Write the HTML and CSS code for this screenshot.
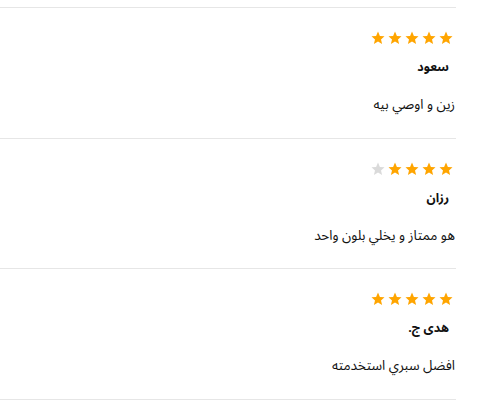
FILE: index.html
```html
<!DOCTYPE html>
<html lang="ar">
<head>
<meta charset="utf-8">
<link rel="stylesheet" href="styles.css">
</head>
<body>
<svg width="0" height="0" class="defs" aria-hidden="true">
  <defs>
    <polygon id="star" points="7,0.6 8.9,4.9 13.5,5.3 10,8.4 11.1,13 7,10.6 2.9,13 4,8.4 0.5,5.3 5.1,4.9"/>
  </defs>
</svg>
<div class="reviews" dir="rtl">
  <div class="review">
    <div class="stars">
      <svg class="on" viewBox="0 0 14 14"><use href="#star"/></svg><svg class="on" viewBox="0 0 14 14"><use href="#star"/></svg><svg class="on" viewBox="0 0 14 14"><use href="#star"/></svg><svg class="on" viewBox="0 0 14 14"><use href="#star"/></svg><svg class="on" viewBox="0 0 14 14"><use href="#star"/></svg>
    </div>
    <div class="name">سعود</div>
    <div class="comment">زين و اوصي بيه</div>
  </div>
  <div class="review">
    <div class="stars">
      <svg class="on" viewBox="0 0 14 14"><use href="#star"/></svg><svg class="on" viewBox="0 0 14 14"><use href="#star"/></svg><svg class="on" viewBox="0 0 14 14"><use href="#star"/></svg><svg class="on" viewBox="0 0 14 14"><use href="#star"/></svg><svg class="off" viewBox="0 0 14 14"><use href="#star"/></svg>
    </div>
    <div class="name">رزان</div>
    <div class="comment">هو ممتاز و يخلي بلون واحد</div>
  </div>
  <div class="review">
    <div class="stars">
      <svg class="on" viewBox="0 0 14 14"><use href="#star"/></svg><svg class="on" viewBox="0 0 14 14"><use href="#star"/></svg><svg class="on" viewBox="0 0 14 14"><use href="#star"/></svg><svg class="on" viewBox="0 0 14 14"><use href="#star"/></svg><svg class="on" viewBox="0 0 14 14"><use href="#star"/></svg>
    </div>
    <div class="name">هدى ج.</div>
    <div class="comment">افضل سبري استخدمته</div>
  </div>
</div>
</body>
</html>
```
FILE: styles.css
```css
html, body {
  margin: 0;
  padding: 0;
  background: #ffffff;
}
body {
  font-family: "Noto Sans Arabic", "Noto Sans", "DejaVu Sans", sans-serif;
  color: #111111;
}
.defs {
  position: absolute;
  width: 0;
  height: 0;
}
.reviews {
  width: 456px;
  padding-top: 7px;
}
.review {
  border-top: 1px solid #e6e6e6;
  padding: 20px 0 23.5px;
  display: flex;
  flex-direction: column;
  align-items: flex-start;
}
.review:last-child {
  border-bottom: 1px solid #e6e6e6;
}
.stars {
  display: flex;
  gap: 3px;
  height: 20px;
  align-items: center;
  padding-right: 3px;
}
.stars svg {
  width: 14px;
  height: 14px;
  display: block;
}
.stars .on { fill: #ffa500; }
.stars .off { fill: #dadada; }
.name {
  margin-top: 10px;
  font-size: 12.5px;
  font-weight: bold;
  line-height: 18px;
  padding-right: 7px;
}
.comment {
  margin-top: 20px;
  font-size: 13.5px;
  line-height: 18px;
  padding-right: 1px;
}
```
